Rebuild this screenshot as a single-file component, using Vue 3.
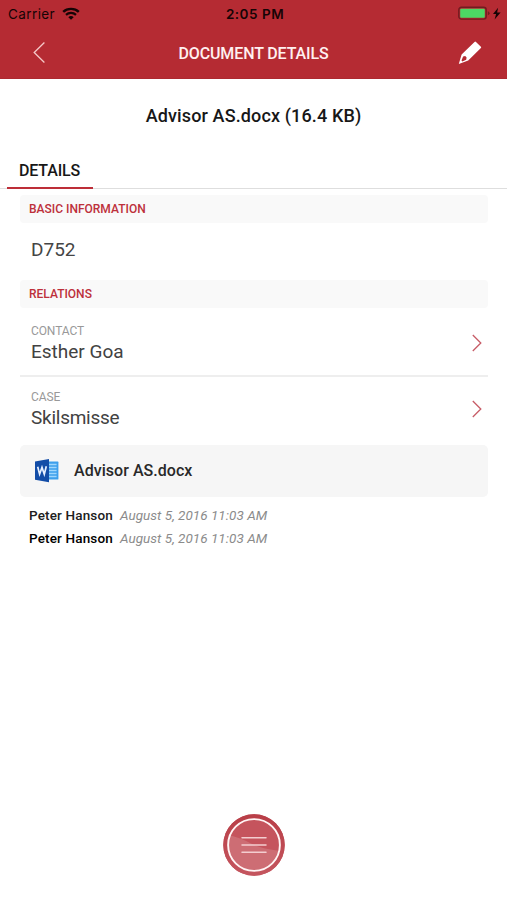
<script setup>
const relations = [
  { label: 'CONTACT', value: 'Esther Goa', cls: 'contact' },
  { label: 'CASE', value: 'Skilsmisse', cls: 'case' },
]
const history = [
  { name: 'Peter Hanson', date: 'August 5, 2016 11:03 AM' },
  { name: 'Peter Hanson', date: 'August 5, 2016 11:03 AM' },
]
</script>

<template>
  <div class="screen">
    <header class="top">
      <div class="status">
        <div class="carrier">
          <span class="carrier-name">Carrier</span>
          <svg class="wifi" width="18" height="13" viewBox="0 0 18 13">
            <path d="M1.2 4.9C5.4.9 12.6.9 16.8 4.9" fill="none" stroke="#150405" stroke-width="2.4" />
            <path d="M4 7.9c2.8-2.6 7.2-2.6 10 0" fill="none" stroke="#150405" stroke-width="2.2" />
            <path d="M6.3 10.2c1.5-1.5 3.9-1.5 5.4 0L9 12.8z" fill="#150405" />
          </svg>
        </div>
        <span class="clock">2:05 PM</span>
        <svg class="battery" width="44" height="16" viewBox="0 0 44 16">
          <rect x=".8" y="1.3" width="27.4" height="11.8" rx="2.6" fill="none" stroke="#721c20" stroke-width="1.4" />
          <rect x="2.2" y="2.7" width="24.6" height="9" rx="1" fill="#4cd964" />
          <path d="M29.8 5.3v4q1.8-.6 1.8-2t-1.8-2z" fill="#721c20" />
          <path d="M40.1 1.8 35 8.1h3.1l-1.5 5.3 6-7h-3.5z" fill="#150405" />
        </svg>
      </div>
      <nav class="bar">
        <svg class="back" width="14" height="24" viewBox="0 0 14 24">
          <path d="M12.4 1.5 2.2 11.5l10.2 10" fill="none" stroke="#f6c9c9" stroke-width="1.3" />
        </svg>
        <h1>DOCUMENT DETAILS</h1>
        <svg class="pencil" width="24" height="24" viewBox="0 0 24 24">
          <path fill-rule="evenodd" d="M16.5.9q.8-.7 1.5 0l4.9 4.8q.6.7 0 1.4L10.2 19.4.8 22.9l2.8-9.5zM5.1 15.6l-1.6 4 .8.8 3.9-1.7.4-2.1-1.4-1.5z" fill="#fff" />
        </svg>
      </nav>
    </header>

    <div class="file-title">Advisor AS.docx (16.4 KB)</div>
    <div class="tabs"><div class="tab">DETAILS</div></div>

    <main class="content">
      <h2 class="section">BASIC INFORMATION</h2>
      <div class="doc-id">D752</div>
      <h2 class="section relations">RELATIONS</h2>

      <div v-for="r in relations" :key="r.label" class="relation" :class="r.cls">
        <div class="relation-copy">
          <div class="label">{{ r.label }}</div>
          <div class="value">{{ r.value }}</div>
        </div>
        <svg class="chevron" width="12" height="18" viewBox="0 0 12 18">
          <path d="m1.8 1 8 8-8 8" fill="none" stroke="#c75b66" stroke-width="1.3" />
        </svg>
      </div>

      <div class="attachment">
        <svg class="word" width="24" height="24" viewBox="0 0 24 24">
          <rect x="11" y="2.6" width="12.4" height="18" rx=".6" fill="#3d9fec" />
          <path d="M14 5.5h7.6M14 8.5h7.6M14 11.5h7.6M14 14.5h7.6M14 17.5h7.6" stroke="#9fd6fc" stroke-width="1.3" />
          <path d="M0 2.4 14 0v23.3L0 20.8z" fill="#134da7" />
          <path d="m2.7 7.8 1.9 7.4L7 8.4l2.3 6.8 2-7.9" fill="none" stroke="#e8f1ff" stroke-width="1.7" />
        </svg>
        <span class="attachment-name">Advisor AS.docx</span>
      </div>

      <div class="history">
        <div v-for="(h, i) in history" :key="i" class="entry">
          <span class="author">{{ h.name }}</span>
          <span class="date">{{ h.date }}</span>
        </div>
      </div>
    </main>

    <footer class="footer">
      <svg width="62" height="62" viewBox="0 0 62 62">
        <defs>
          <clipPath id="disc"><circle cx="31" cy="31" r="30.7" /></clipPath>
          <linearGradient id="shade" x1="0" y1="0" x2="0" y2="1">
            <stop offset="0" stop-color="#b93f48" />
            <stop offset="1" stop-color="#c4555e" />
          </linearGradient>
        </defs>
        <circle cx="31" cy="31" r="30.7" fill="url(#shade)" />
        <circle cx="31" cy="31" r="25.5" fill="#c5545d" />
        <path d="M6 21Q18 24 27 29T57 37l-4 20H10L4 40z" fill="#cd6d74" clip-path="url(#disc)" />
        <circle cx="31" cy="31" r="28.3" fill="none" stroke="url(#shade)" stroke-width="4.8" />
        <circle cx="31" cy="31" r="25.9" fill="none" stroke="#fff5f5" stroke-width="1.9" />
        <path d="M19 23.8h24M19 31h24M19 38.2h24" stroke="#f3cdd0" stroke-width="1.5" stroke-linecap="round" />
      </svg>
    </footer>
  </div>
</template>

<style>
body { margin: 0; background: #fff; }
</style>

<style scoped>
* { box-sizing: border-box; }
svg { display: block; flex: none; }
.screen {
  width: 507px; height: 900px; display: flex; flex-direction: column;
  background: #fff; color: #171717; overflow: hidden;
  font-family: Roboto, "Liberation Sans", sans-serif; white-space: nowrap;
}
.top { height: 79px; background: #b52b33; flex: none; border-bottom: 1px solid #ad2930; }
.status {
  height: 28px; display: grid; grid-template-columns: 1fr auto 1fr; align-items: center;
  padding: 0 5px 0 8px; color: #150405;
  font-family: Inter, "Liberation Sans", sans-serif; font-size: 13.5px;
}
.carrier { display: flex; align-items: center; gap: 7px; }
.carrier-name { letter-spacing: .4px; }
.wifi { margin-top: -2px; }
.clock { font-weight: 600; font-size: 13.5px; letter-spacing: .5px; }
.battery { justify-self: end; }
.bar { height: 50px; display: grid; grid-template-columns: 60px 1fr 60px; align-items: center; }
.back { margin-left: 32px; }
.bar h1 { margin: 2px 0 0; text-align: center; font-size: 16px; line-height: 20px; font-weight: 500; letter-spacing: -.12px; color: #fff0f0; }
.pencil { margin-left: 11px; }
.file-title { height: 72px; display: flex; align-items: center; justify-content: center; font-size: 18px; font-weight: 500; letter-spacing: .13px; flex: none; }
.tabs { height: 38px; flex: none; padding-left: 7px; border-bottom: 1px solid #dedede; }
.tab { width: 86px; height: 38px; padding-left: 12px; border-bottom: 2px solid #bd2e38; font-size: 16px; line-height: 40px; font-weight: 500; letter-spacing: -.15px; }
.content { margin: 6px 19px 0 20px; }
.section { height: 28px; margin: 0; padding-left: 9px; border-radius: 4px; background: #f9f9f9; color: #bd303b; font-size: 12px; line-height: 28px; font-weight: 500; }
.relations { line-height: 29px; }
.doc-id { height: 57px; padding-left: 11px; font-size: 19px; line-height: 54px; color: #454545; }
.relation { display: flex; align-items: center; justify-content: space-between; padding: 0 5px 0 11px; }
.contact { height: 69px; border-bottom: 2px solid #eeeeee; }
.case { height: 62px; }
.relation-copy { padding-top: 1px; }
.case .relation-copy { padding-top: 0; }
.label { font-size: 12px; line-height: 20px; height: 20px; color: #999; letter-spacing: -.1px; }
.value { font-size: 19px; line-height: 21px; height: 22px; color: #424242; }
.case .value { letter-spacing: -.25px; }
.chevron { margin-top: 2px; }
.attachment { height: 52px; margin-top: 6px; padding-left: 15px; display: flex; align-items: center; gap: 15px; border-radius: 5px; background: #f6f6f6; font-size: 16px; font-weight: 500; color: #292929; }
.attachment-name { margin-top: -2px; letter-spacing: .04px; }
.history { padding: 6px 0 0 9px; }
.entry { height: 23px; display: flex; align-items: center; gap: 7px; font-size: 13.5px; }
.author { font-weight: 500; color: #202020; letter-spacing: .15px; }
.entry:last-child .author { color: #000; }
.date { color: #8b8b8b; font-style: italic; letter-spacing: .03px; }
.footer { margin-top: auto; height: 86px; flex: none; display: flex; justify-content: center; }
</style>
